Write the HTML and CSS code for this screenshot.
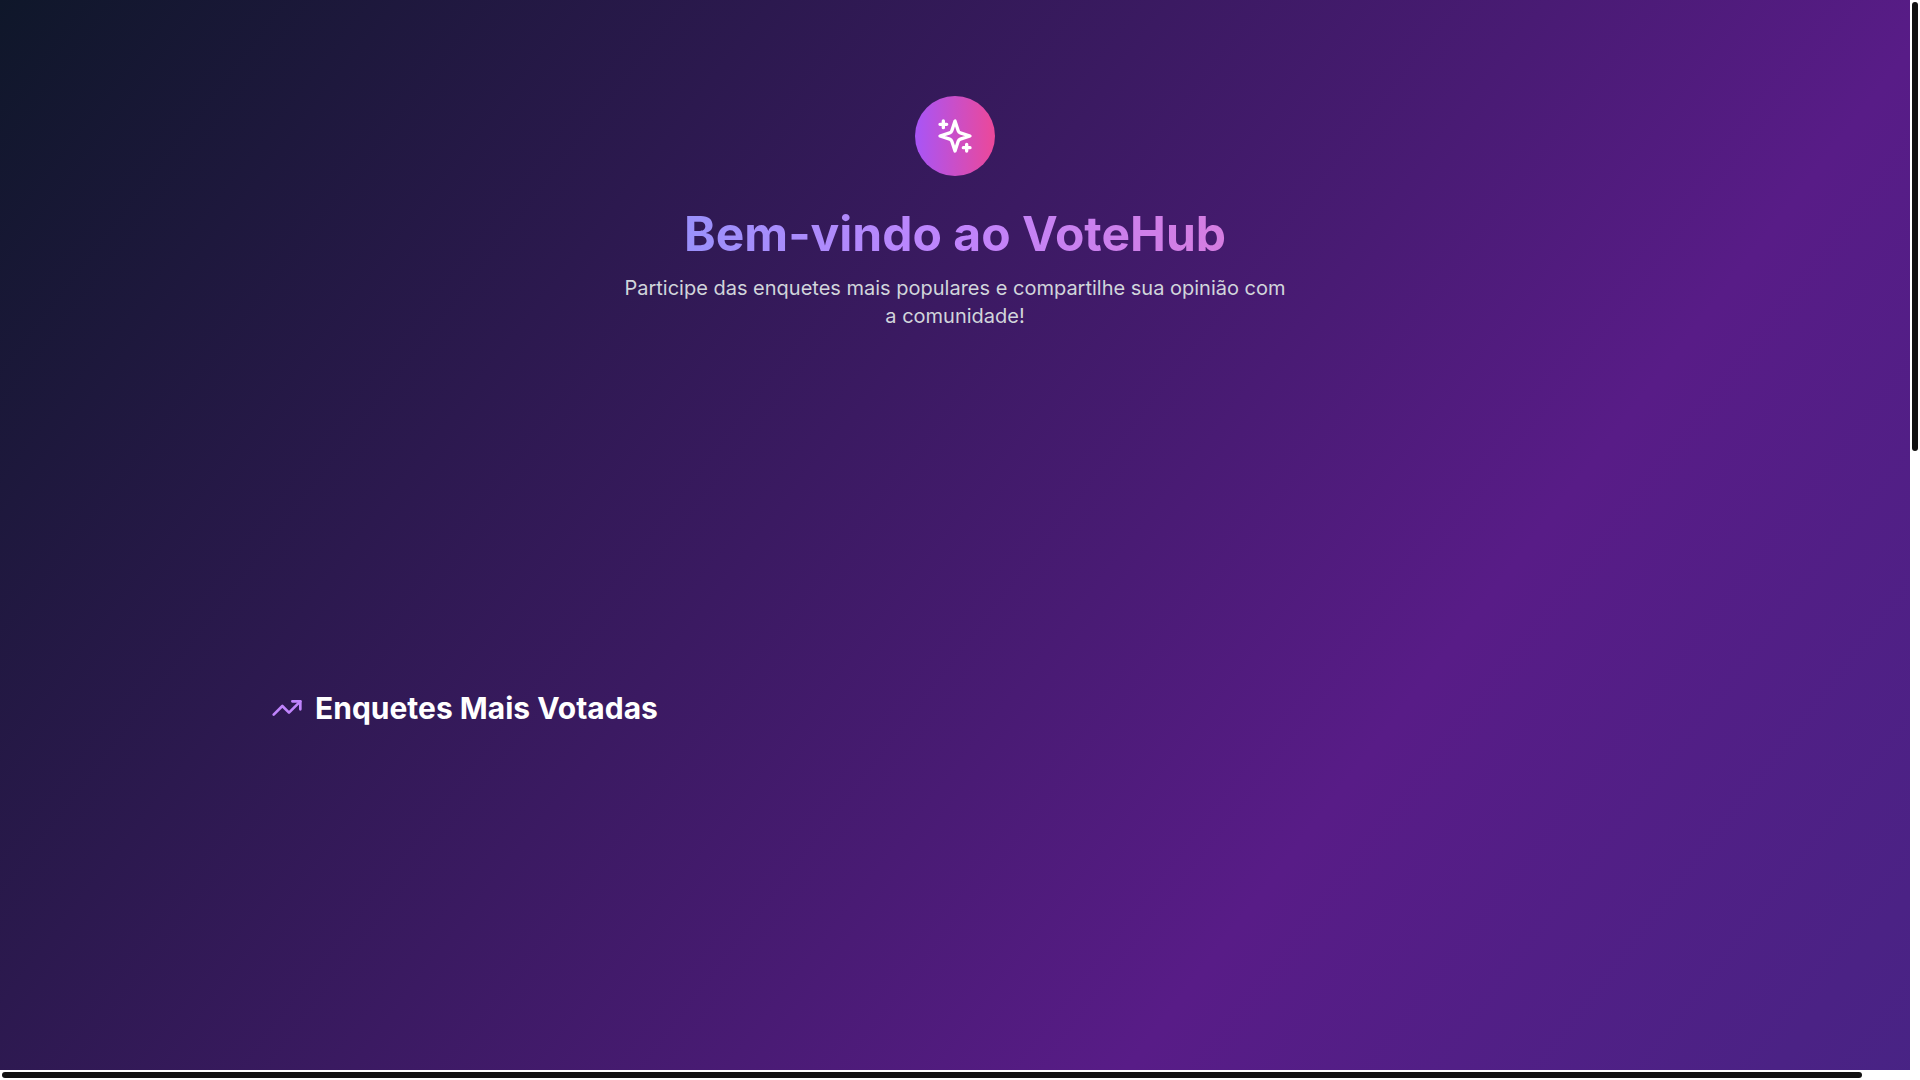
FILE: index.html
```html
<!DOCTYPE html>
<html lang="pt-BR">
<head>
<meta charset="utf-8">
<meta name="viewport" content="width=device-width, initial-scale=1">
<title>VoteHub</title>
<link rel="stylesheet" href="styles.css">
</head>
<body>
<div class="shell">
  <main class="viewport">
    <header class="hero">
      <div class="hero-badge">
        <svg class="icon-sparkles" viewBox="0 0 24 24" aria-hidden="true">
          <path d="m12 3-1.912 5.813a2 2 0 0 1-1.275 1.275L3 12l5.813 1.912a2 2 0 0 1 1.275 1.275L12 21l1.912-5.813a2 2 0 0 1 1.275-1.275L21 12l-5.813-1.912a2 2 0 0 1-1.275-1.275L12 3Z"/>
          <path d="M5 3v4M3 5h4M19 17v4M17 19h4"/>
        </svg>
      </div>
      <h1 class="hero-title">Bem-vindo ao VoteHub</h1>
      <p class="hero-text">Participe das enquetes mais populares e compartilhe sua opinião com a comunidade!</p>
    </header>
    <section class="polls">
      <h2 class="polls-title">
        <svg class="icon-trend" viewBox="0 0 24 24" aria-hidden="true">
          <path d="M22 7 13.5 15.5 8.5 10.5 2 17"/>
          <path d="M16 7h6v6"/>
        </svg>
        Enquetes Mais Votadas
      </h2>
    </section>
  </main>
  <div class="track track-vertical" aria-hidden="true"><div class="thumb thumb-vertical"></div></div>
  <div class="track track-horizontal" aria-hidden="true"><div class="thumb thumb-horizontal"></div></div>
</div>
</body>
</html>
```
FILE: styles.css
```css
* {
  box-sizing: border-box;
  margin: 0;
}

body {
  font-family: Inter, "Liberation Sans", sans-serif;
  background: #fff;
  color: #fff;
}

.shell {
  display: grid;
  grid-template-columns: minmax(0, 1fr) 10px;
  grid-template-rows: minmax(0, 1fr) 10px;
  height: 100vh;
}

/* The gradient spans the whole scrollable surface, larger than the view. */
.viewport {
  overflow: hidden;
  background: linear-gradient(to bottom right, #0f172a, #581c87, #312e81) 0 0 / 102% 237% no-repeat;
}

.hero,
.polls {
  max-width: 1400px;
  margin: 0 auto;
}

.hero {
  display: flex;
  flex-direction: column;
  align-items: center;
  padding: 96px 16px 0;
  text-align: center;
}

.hero-badge {
  display: grid;
  place-items: center;
  width: 80px;
  height: 80px;
  margin-bottom: 24px;
  border-radius: 50%;
  background: linear-gradient(to right, #a855f7, #ec4899);
}

.icon-sparkles,
.icon-trend {
  fill: none;
  stroke: currentColor;
  stroke-width: 2;
  stroke-linecap: round;
  stroke-linejoin: round;
}

.icon-sparkles {
  width: 40px;
  height: 40px;
}

.hero-title {
  width: 100%;
  margin-bottom: 6px;
  font-size: 48px;
  font-weight: 700;
  line-height: 68px;
  color: transparent;
  background: linear-gradient(to right, #60a5fa, #c084fc, #f472b6);
  -webkit-background-clip: text;
  background-clip: text;
}

.hero-text {
  max-width: 672px;
  font-size: 20px;
  font-weight: 400;
  line-height: 28px;
  color: #d1d5db;
}

.polls {
  padding: 360px 16px 0;
}

.polls-title {
  display: flex;
  align-items: center;
  gap: 12px;
  font-size: 30px;
  font-weight: 700;
  line-height: 36px;
}

.icon-trend {
  width: 32px;
  height: 32px;
  color: #c084fc;
}

.track {
  padding: 2px;
}

.thumb {
  border-radius: 3px;
  background: #111;
}

.thumb-vertical {
  width: 6px;
  height: 42.1%;
}

.thumb-horizontal {
  width: 97.6%;
  height: 6px;
}
```
